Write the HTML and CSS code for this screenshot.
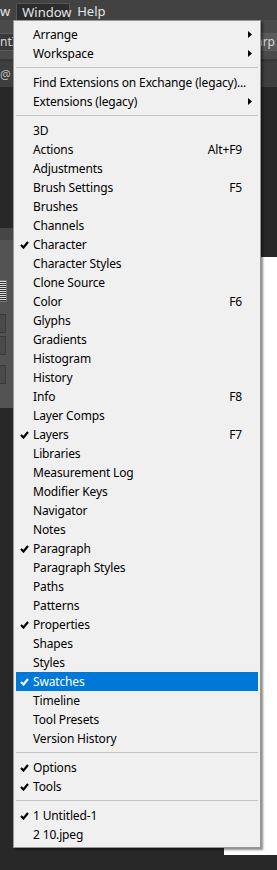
FILE: index.html
```html
<!DOCTYPE html>
<html lang="en">
<head>
  <meta charset="UTF-8">
  <meta name="viewport" content="width=device-width, initial-scale=1">
  <title>Window menu</title>
  <link rel="stylesheet" href="styles.css">
</head>
<body>

  <div class="menubar">
    <span class="mb-item first">w</span>
    <span class="mb-item open">Window</span>
    <span class="mb-item">Help</span>
  </div>

  <div class="optbar">
    <span class="field left">ntIt</span>
    <span class="field right">arp</span>
  </div>

  <div class="tabbar">
    <span class="tab">@ (</span>
  </div>

  <div class="workspace">
    <div class="panel">
      <div class="panel-head"></div>
      <div class="panel-body">
        <div class="list-btn"></div>
        <div class="box"></div>
        <div class="box"></div>
        <div class="box gap"></div>
      </div>
    </div>
    <div class="doc"></div>
  </div>

  <div class="menu">
    <div class="item sub">Arrange</div>
    <div class="item sub">Workspace</div>
    <div class="sep"></div>
    <div class="item">Find Extensions on Exchange (legacy)...</div>
    <div class="item sub">Extensions (legacy)</div>
    <div class="sep"></div>
    <div class="item">3D</div>
    <div class="item">Actions<span class="key">Alt+F9</span></div>
    <div class="item">Adjustments</div>
    <div class="item">Brush Settings<span class="key">F5</span></div>
    <div class="item">Brushes</div>
    <div class="item">Channels</div>
    <div class="item checked">Character</div>
    <div class="item">Character Styles</div>
    <div class="item">Clone Source</div>
    <div class="item">Color<span class="key">F6</span></div>
    <div class="item">Glyphs</div>
    <div class="item">Gradients</div>
    <div class="item">Histogram</div>
    <div class="item">History</div>
    <div class="item">Info<span class="key">F8</span></div>
    <div class="item">Layer Comps</div>
    <div class="item checked">Layers<span class="key">F7</span></div>
    <div class="item">Libraries</div>
    <div class="item">Measurement Log</div>
    <div class="item">Modifier Keys</div>
    <div class="item">Navigator</div>
    <div class="item">Notes</div>
    <div class="item checked">Paragraph</div>
    <div class="item">Paragraph Styles</div>
    <div class="item">Paths</div>
    <div class="item">Patterns</div>
    <div class="item checked">Properties</div>
    <div class="item">Shapes</div>
    <div class="item">Styles</div>
    <div class="item checked hover">Swatches</div>
    <div class="item">Timeline</div>
    <div class="item">Tool Presets</div>
    <div class="item">Version History</div>
    <div class="sep"></div>
    <div class="item checked">Options</div>
    <div class="item checked">Tools</div>
    <div class="sep"></div>
    <div class="item checked">1 Untitled-1</div>
    <div class="item">2 10.jpeg</div>
  </div>

  <script>
    // tick marks and submenu arrows
    const tick = '<svg class="tick" width="9" height="8" viewBox="0 0 9 8"><path d="M1 4 L3.5 6.5 L8 1" fill="none" stroke="currentColor" stroke-width="2.2"/></svg>';
    const arrow = '<svg class="arrow" width="4" height="7" viewBox="0 0 4 7"><path d="M0 0 L4 3.5 L0 7 Z" fill="#000"/></svg>';

    document.querySelectorAll('.item.checked').forEach(el => el.insertAdjacentHTML('afterbegin', tick));
    document.querySelectorAll('.item.sub').forEach(el => el.insertAdjacentHTML('beforeend', arrow));
  </script>

</body>
</html>
```

FILE: styles.css
```css
body {
  margin: 0;
  width: 277px;
  height: 870px;
  overflow: hidden;
  background: #282828;
  font-family: 'Segoe UI', 'Noto Sans', sans-serif;
  font-size: 12px;
  position: relative;
}
.menubar {
  height: 20px;
  background: #424242;
  display: flex;
  align-items: flex-end;
  color: #e4e4e4;
  font-size: 13px;
}
.mb-item {
  height: 17px;
  line-height: 16px;
  padding: 0 5px;
  box-sizing: border-box;
}
.mb-item.first {
  padding: 0 6px 0 0;
}
.mb-item.open {
  width: 54px;
  background: #2c2c2c;
  border: 1px solid #555;
  border-bottom: none;
  border-radius: 2px 2px 0 0;
  margin-right: 2px;
}
.optbar {
  height: 40px;
  background: #4a4a4a;
  border-bottom: 1px solid #3a3a3a;
  display: flex;
  justify-content: space-between;
  align-items: center;
  padding-top: 4px;
  box-sizing: border-box;
}
.field {
  height: 16px;
  line-height: 15px;
  background: #383838;
  color: #d8d8d8;
  border-top: 1px solid #5c5c5c;
  border-bottom: 1px solid #5c5c5c;
  font-size: 12px;
}
.field.left {
  padding-right: 10px;
}
.field.right {
  padding: 0 2px 0 20px;
  background: #5a5a5a;
}
.tabbar {
  height: 26px;
  background: #3e3e3e;
  border-top: 1px solid #333;
  color: #bbb;
  display: flex;
  align-items: center;
}
.tab {
  font-size: 12px;
}
.workspace {
  display: flex;
  align-items: flex-start;
}
.panel {
  width: 120px;
  margin-top: 141px;
}
.panel-head {
  height: 12px;
  background: #464646;
}
.panel-body {
  height: 168px;
  background: #535353;
  padding-top: 40px;
  box-sizing: border-box;
}
.list-btn {
  width: 6px;
  height: 20px;
  background: repeating-linear-gradient(#ddd 0 1px, #333 1px 2px);
  border: 1px solid #777;
  border-left: none;
}
.box {
  width: 5px;
  height: 17px;
  margin-top: 12px;
  background: #4a4a4a;
  border: 1px solid #3a3a3a;
  border-left: none;
}
.box + .box {
  margin-top: 3px;
}
.box.gap {
  margin-top: 10px;
}
.doc {
  width: 53px;
  height: 598px;
  margin-left: 104px;
  margin-top: 170px;
  background: #fff;
}
.menu {
  position: absolute;
  left: 13px;
  top: 20px;
  width: 248px;
  box-sizing: border-box;
  background: #f0f0f0;
  border: 1px solid #979797;
  box-shadow: 2px 2px 2px rgba(0, 0, 0, 0.45);
  padding: 4px 2px 3px;
  color: #000;
  letter-spacing: -0.15px;
}
.item {
  position: relative;
  height: 19px;
  line-height: 19px;
  padding: 0 16px 0 17px;
  display: flex;
  justify-content: space-between;
  white-space: nowrap;
}
.item.hover {
  background: #0078d7;
  color: #fff;
}
.tick {
  position: absolute;
  left: 4px;
  top: 6px;
}
.arrow {
  position: absolute;
  right: 6px;
  top: 6px;
}
.sep {
  height: 1px;
  background: #c4c4c4;
  margin: 4px 0 5px;
}
```
